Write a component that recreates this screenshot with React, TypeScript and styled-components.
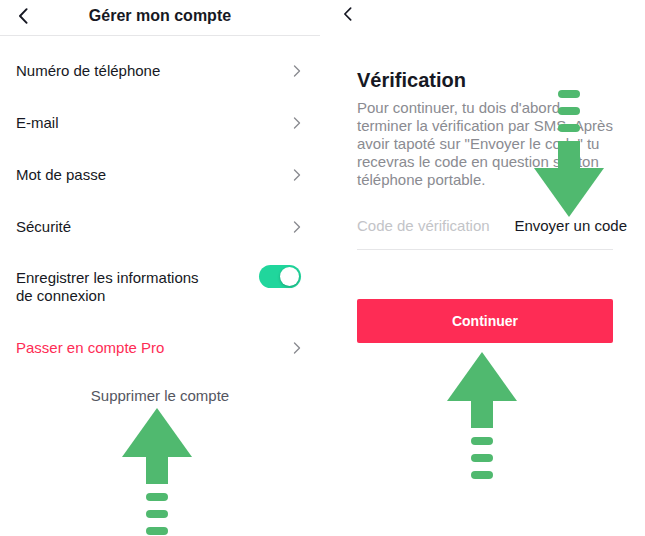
import React from 'react';
import styled, {createGlobalStyle} from 'styled-components';

const GlobalStyle = createGlobalStyle`
    html, body {
        margin: 0;
        padding: 0;
        background: #ffffff;
    }

    body {
        font-family: "Liberation Sans", Arial, sans-serif;
        color: #161823;
        -webkit-font-smoothing: antialiased;
    }
`

const colors = {
    text: '#161823',
    muted: '#8a8b91',
    faint: '#c3c4c8',
    line: '#e6e6e8',
    pink: '#fe2c55',
    mint: '#20d69c',
    arrow: '#50b96f',
}

const settingsRows = [
    {id: 1, label: 'Numéro de téléphone'},
    {id: 2, label: 'E-mail'},
    {id: 3, label: 'Mot de passe'},
    {id: 4, label: 'Sécurité'},
]

const BackIcon = ({w, h}: { w: number, h: number }) => (
    <svg width={w} height={h} viewBox="0 0 10 16" fill="none">
        <path d="M8.6 1.2L2 8l6.6 6.8" stroke={colors.text} strokeWidth="1.9" strokeLinecap="round" strokeLinejoin="round"/>
    </svg>
)

const ChevronIcon = () => (
    <svg width="8" height="12" viewBox="0 0 8 12" fill="none">
        <path d="M1.5 1l5 5-5 5" stroke="#8a8b91" strokeWidth="1.4" strokeLinecap="round" strokeLinejoin="round"/>
    </svg>
)

// big green hint arrow, drawn pointing up; "down" flips it
const HintArrow = ({down, left, top}: { down?: boolean, left: number, top: number }) => (
    <ArrowSvg $down={down} $left={left} $top={top} width="70" height="127" viewBox="0 0 70 127">
        <polygon points="35,0 70,49 0,49" fill={colors.arrow}/>
        <rect x="24" y="48" width="22" height="28" fill={colors.arrow}/>
        <rect x="24" y="85" width="22" height="8" rx="4" fill={colors.arrow}/>
        <rect x="24" y="102" width="22" height="8" rx="4" fill={colors.arrow}/>
        <rect x="24" y="119" width="22" height="8" rx="4" fill={colors.arrow}/>
    </ArrowSvg>
)

export default function App() {
    return (
        <>
            <GlobalStyle/>
            <Screens>
                <SettingsPanel>
                    <Header>
                        <BackButton><BackIcon w={10} h={16}/></BackButton>
                        <HeaderTitle>Gérer mon compte</HeaderTitle>
                    </Header>

                    <RowList>
                        {settingsRows.map(row => (
                            <Row key={row.id}>
                                <RowLabel>{row.label}</RowLabel>
                                <ChevronIcon/>
                            </Row>
                        ))}

                        <ToggleRow>
                            <RowLabel>Enregistrer les informations<br/>de connexion</RowLabel>
                            <Toggle><Knob/></Toggle>
                        </ToggleRow>

                        <Row>
                            <RowLabel $accent>Passer en compte Pro</RowLabel>
                            <ChevronIcon/>
                        </Row>
                    </RowList>

                    <DeleteLink>Supprimer le compte</DeleteLink>

                    <HintArrow left={122} top={408}/>
                </SettingsPanel>

                <VerifyPanel>
                    <TopBar><BackIcon w={9} h={14}/></TopBar>

                    <VerifyContent>
                        <VerifyTitle>Vérification</VerifyTitle>
                        <Description>
                            Pour continuer, tu dois d'abord<br/>
                            terminer la vérification par SMS. Après<br/>
                            avoir tapoté sur "Envoyer le code" tu<br/>
                            recevras le code en question sur ton<br/>
                            téléphone portable.
                        </Description>

                        <CodeRow>
                            <Placeholder>Code de vérification</Placeholder>
                            <SendCode>Envoyer un code</SendCode>
                        </CodeRow>

                        <ContinueButton>Continuer</ContinueButton>
                    </VerifyContent>

                    <HintArrow down left={214} top={90}/>
                    <HintArrow left={127} top={352}/>
                </VerifyPanel>
            </Screens>
        </>
    );
}


const Screens = styled.div`
    display: flex;
    width: 645px;
    height: 536px;
    overflow: hidden;
`

const SettingsPanel = styled.section`
    position: relative;
    width: 320px;
    flex-shrink: 0;
`

const Header = styled.header`
    position: relative;
    display: flex;
    align-items: center;
    justify-content: center;
    height: 31px;
    padding-bottom: 4px;
    border-bottom: 1px solid ${colors.line};
`

const BackButton = styled.span`
    position: absolute;
    left: 18px;
    top: 8px;
    display: flex;
`

const HeaderTitle = styled.h1`
    margin: 0;
    font-size: 16px;
    font-weight: 700;
    color: ${colors.text};
`

const RowList = styled.ul`
    margin: 0;
    padding: 9px 0 0;
    list-style: none;
`

const Row = styled.li`
    display: flex;
    align-items: center;
    justify-content: space-between;
    height: 52px;
    padding: 0 19px 0 16px;
`

const ToggleRow = styled(Row)`
    align-items: flex-start;
    height: auto;
    padding-top: 16px;
    padding-bottom: 17px;
`

const RowLabel = styled.span<{ $accent?: boolean }>`
    font-size: 15px;
    line-height: 18px;
    color: ${props => props.$accent ? colors.pink : colors.text};
`

const Toggle = styled.span`
    display: flex;
    align-items: center;
    justify-content: flex-end;
    width: 42px;
    height: 23px;
    margin-top: -4px;
    padding: 0 2px;
    box-sizing: border-box;
    border-radius: 12px;
    background: ${colors.mint};
`

const Knob = styled.span`
    width: 19px;
    height: 19px;
    border-radius: 50%;
    background: #ffffff;
    box-shadow: 0 1px 3px rgba(0, 0, 0, 0.25);
`

const DeleteLink = styled.div`
    padding-top: 14px;
    text-align: center;
    font-size: 15px;
    line-height: 16px;
    color: #54565f;
`

const VerifyPanel = styled.section`
    position: relative;
    width: 325px;
    flex-shrink: 0;
`

const TopBar = styled.div`
    display: flex;
    height: 23px;
    padding: 7px 0 0 23px;
`

const VerifyContent = styled.div`
    display: flex;
    flex-direction: column;
    width: 256px;
    padding: 38px 0 0 37px;
`

const VerifyTitle = styled.h2`
    margin: 0;
    font-size: 20px;
    line-height: 24px;
    font-weight: 700;
    color: ${colors.text};
`

const Description = styled.p`
    margin: 7px 0 0;
    font-size: 15px;
    line-height: 18px;
    white-space: nowrap;
    color: ${colors.muted};
`

const CodeRow = styled.div`
    display: flex;
    align-items: center;
    justify-content: space-between;
    height: 48px;
    margin-top: 12px;
    border-bottom: 1px solid ${colors.line};
`

const Placeholder = styled.span`
    font-size: 15px;
    color: ${colors.faint};
`

const SendCode = styled.span`
    margin-right: -14px;
    font-size: 15px;
    color: ${colors.text};
`

const ContinueButton = styled.button`
    height: 44px;
    margin-top: 49px;
    border: none;
    border-radius: 2px;
    background: ${colors.pink};
    color: #ffffff;
    font-family: inherit;
    font-size: 14px;
    font-weight: 700;
`

const ArrowSvg = styled.svg<{ $down?: boolean, $left: number, $top: number }>`
    position: absolute;
    left: ${props => props.$left}px;
    top: ${props => props.$top}px;
    transform: ${props => props.$down ? 'scaleY(-1)' : 'none'};
`
